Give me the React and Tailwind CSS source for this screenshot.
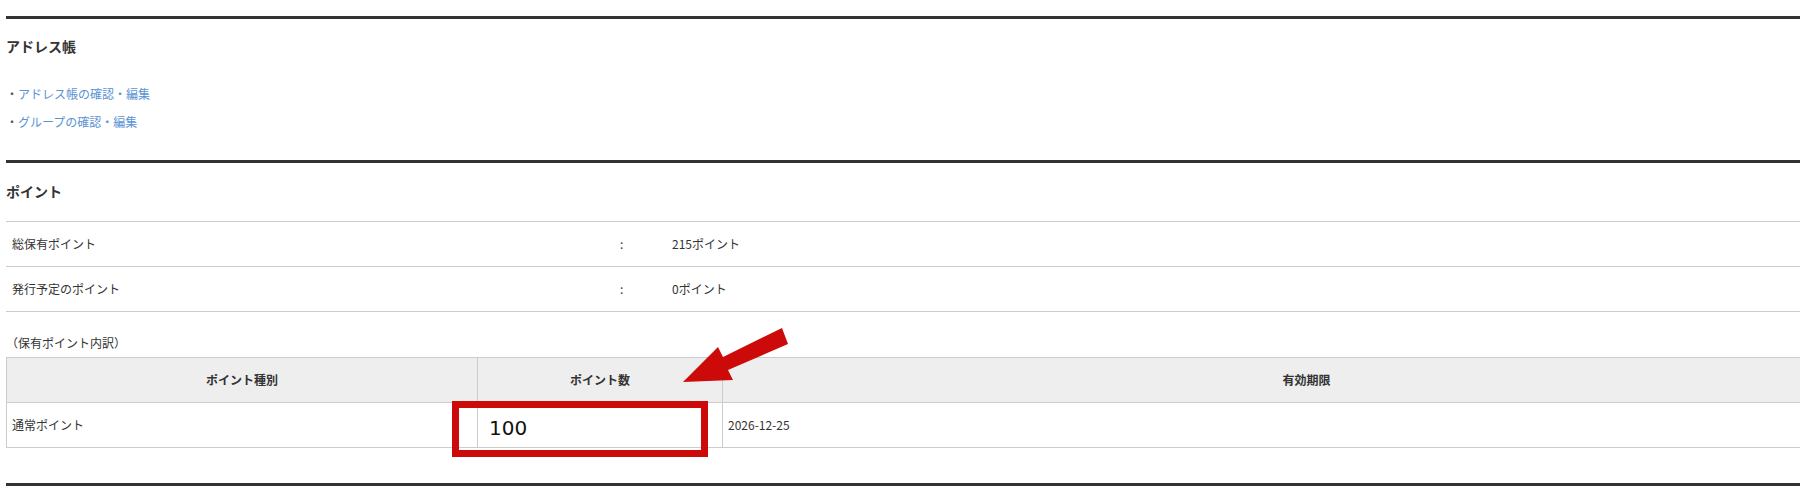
import React from 'react';

const font = { fontFamily: '"Noto Sans CJK JP", "Noto Sans", sans-serif' };

const summaryRows = [
  { label: '総保有ポイント', value: '215ポイント' },
  { label: '発行予定のポイント', value: '0ポイント' },
];

const links = ['アドレス帳の確認・編集', 'グループの確認・編集'];

export default function App() {
  return (
    <div className="relative w-[1800px] overflow-hidden bg-white pt-[16px] pl-[6px] text-[#333]" style={font}>
      {/* アドレス帳 */}
      <section className="border-t-[3px] border-[#333] pb-[24px]">
        <h2 className="mt-[17px] text-[14px] font-bold leading-[20px]">アドレス帳</h2>
        <ul className="mt-[24px] text-[12px] leading-[28px]">
          {links.map((l) => (
            <li key={l}>
              <span className="text-[#555]">・</span>
              <a href="#" className="text-[#5b93d3]">{l}</a>
            </li>
          ))}
        </ul>
      </section>

      {/* ポイント */}
      <section className="border-t-[3px] border-[#333]">
        <h2 className="mt-[18px] mb-[20px] text-[14px] font-bold leading-[20px]">ポイント</h2>
        <div className="border-b border-[#ccc] text-[12px]">
          {summaryRows.map((r) => (
            <div key={r.label} className="flex h-[45px] items-center border-t border-[#ccc]">
              <div className="w-[614px] pl-[6px]">{r.label}</div>
              <div className="w-[52px]">:</div>
              <div>{r.value}</div>
            </div>
          ))}
        </div>

        <p className="mt-[21px] mb-[4px] text-[12px] leading-[20px]">（保有ポイント内訳）</p>

        <div className="border-t border-l border-[#ccc] text-[12px]">
          <div className="grid h-[45px] grid-cols-[471px_245px_1fr] border-b border-[#ccc] bg-[#eee] font-bold">
            <div className="flex items-center justify-center border-r border-[#ccc]">ポイント種別</div>
            <div className="flex items-center justify-center border-r border-[#ccc]">ポイント数</div>
            <div className="flex items-center justify-center pl-[90px]">有効期限</div>
          </div>
          <div className="grid h-[45px] grid-cols-[471px_245px_1fr] border-b border-[#ccc]">
            <div className="flex items-center border-r border-[#ccc] pl-[5px]">通常ポイント</div>
            <div className="flex items-center border-r border-[#ccc] pl-[11px] pt-[6px]">
              <span className="text-[20px] leading-none text-[#111]" style={{ fontFamily: '"DejaVu Sans", sans-serif' }}>100</span>
            </div>
            <div className="flex items-center pl-[5px]">2026-12-25</div>
          </div>
        </div>
      </section>

      <div className="mt-[35px] h-[14px] border-t-[3px] border-[#333]" />

      {/* annotation overlays */}
      <div className="absolute left-[452px] top-[401px] h-[56px] w-[256px] border-[7px] border-[#cc0a0a]" />
      <svg className="absolute left-[680px] top-[325px]" width="112" height="60" viewBox="0 0 112 60">
        <polygon points="3,57 38,22 43,32 102,3 108,19 48,45 53,55" fill="#cc0a0a" />
      </svg>
    </div>
  );
}
